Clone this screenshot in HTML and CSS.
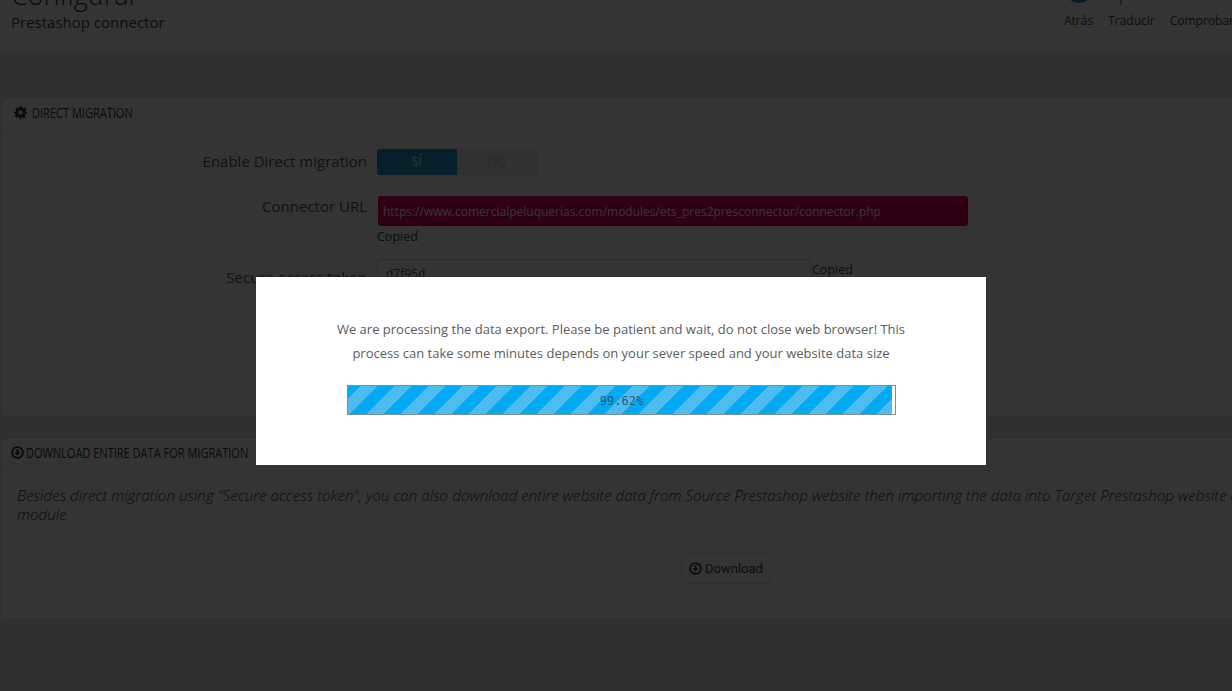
FILE: index.html
```html
<!DOCTYPE html>
<html lang="es">
<head>
  <meta charset="UTF-8" />
  <title>Configurar - Prestashop connector</title>
  <link rel="stylesheet" href="styles.css">
</head>
<body>
  <div class="page">
    <div class="page-head">
      <div class="head-titles">
        <h1>Configurar</h1>
        <h2>Prestashop connector</h2>
      </div>
      <div class="toolbar">
        <div class="tool">
          <svg class="tool-icon" width="24" height="28" viewBox="0 0 24 28"><circle cx="12" cy="9" r="15" fill="#1f8fb5"/></svg>
          <span>Atrás</span>
        </div>
        <div class="tool">
          <svg class="tool-icon" width="24" height="28" viewBox="0 0 24 28"><path d="M2 18V26" stroke="#3aa08f" stroke-width="1.500" fill="none"/></svg>
          <span>Traducir</span>
        </div>
        <div class="tool">
          <span class="tool-icon"></span>
          <span>Comprobar</span>
        </div>
      </div>
    </div>

    <div class="content">
      <div class="panel panel-direct">
        <div class="panel-head">
          <svg width="13" height="13" viewBox="0 0 24 24"><path fill="currentColor" fill-rule="evenodd" d="M10 0h4l.7 3.300 2.200.9L19.800 2.400l2.800 2.800-1.800 2.900.9 2.200L24 11v3l-3.300.7-.9 2.200 1.800 2.900-2.800 2.800-2.900-1.800-2.200.9L13 24h-3l-.7-3.300-2.200-.9-2.900 1.800-2.800-2.800 1.800-2.900-.9-2.200L0 14v-3l3.300-.7.9-2.200-1.800-2.900L5.200 2.400l2.900 1.800 2.200-.9zM12 8a4 4 0 1 0 0 8 4 4 0 0 0 0-8z"/></svg>
          <span class="head-text">DIRECT MIGRATION</span>
        </div>
        <div class="form-row row-enable">
          <label>Enable Direct migration</label>
          <div class="switch">
            <span class="switch-on">SÍ</span>
            <span class="switch-off">NO</span>
          </div>
        </div>
        <div class="form-row row-url">
          <label>Connector URL</label>
          <div>
            <div class="url-box">https://www.comercialpeluquerias.com/modules/ets_pres2presconnector/connector.php</div>
            <div class="copied">Copied</div>
          </div>
        </div>
        <div class="form-row row-token">
          <label>Secure access token</label>
          <div class="token-box">d7f95d</div>
          <div class="copied">Copied</div>
        </div>
      </div>

      <div class="panel panel-download">
        <div class="panel-head">
          <svg width="13" height="13" viewBox="0 0 24 24"><circle cx="12" cy="12" r="10" fill="none" stroke="currentColor" stroke-width="3.500"/><path fill="currentColor" d="M10 6h4v6h3.500L12 18l-5.500-6H10z"/></svg>
          <span class="head-text">DOWNLOAD ENTIRE DATA FOR MIGRATION</span>
        </div>
        <p class="panel-text">Besides direct migration using "Secure access token", you can also download entire website data from Source Prestashop website then importing the data into Target Prestashop website and this module</p>
        <div class="download-row">
          <button class="download-btn">
            <svg width="13" height="13" viewBox="0 0 24 24"><circle cx="12" cy="12" r="10" fill="none" stroke="currentColor" stroke-width="3.500"/><path fill="currentColor" d="M10 6h4v6h3.500L12 18l-5.500-6H10z"/></svg>
            Download
          </button>
        </div>
      </div>
    </div>
  </div>

  <!-- popup while export runs -->
  <div class="overlay">
    <div class="modal">
      <p>We are processing the data export. Please be patient and wait, do not close web browser! This process can take some minutes depends on your sever speed and your website data size</p>
      <div class="progress">
        <div class="progress-bar" style="width: 99.4%"></div>
        <span class="progress-label">99.62%</span>
      </div>
    </div>
  </div>
</body>
</html>
```

FILE: styles.css
```css
* {
    margin: 0;
    padding: 0;
    box-sizing: border-box;
}

html, body {
    height: 100%;
    overflow: hidden;
}

body {
    background-color: #eaeaea;
    color: #555;
    font-family: 'Open Sans', sans-serif;
    font-size: 13px;
}

.page {
    width: 1560px;
    margin-top: -22px;
}

.page-head {
    height: 75px;
    background-color: #fff;
    border-bottom: 1px solid #dfe3e5;
    padding-left: 11px;
    display: flex;
    justify-content: space-between;
    width: 1232px;
    overflow: hidden;
}

.page-head h1 {
    font-size: 27px;
    font-weight: 300;
    line-height: 30px;
    margin-top: 2px;
    color: #333;
}

.page-head h2 {
    font-size: 15px;
    font-weight: 400;
    line-height: 20px;
    margin-top: 2px;
    color: #444;
}

.toolbar {
    display: flex;
    gap: 15px;
    flex-shrink: 0;
    margin-right: -2px;
    padding-top: 1px;
}

.tool {
    display: flex;
    flex-direction: column;
    align-items: center;
    font-size: 12px;
    line-height: 16px;
    color: #444;
}

.tool-icon {
    display: block;
    height: 28px;
    margin-bottom: 6px;
}

.content {
    padding: 44px 0 0 1px;
}

.panel {
    background-color: #fff;
    border: 1px solid #d3d8db;
    border-radius: 5px;
}

.panel-direct {
    height: 321px;
    margin-bottom: 19px;
}

.panel-download {
    height: 183px;
}

.panel-head {
    height: 33px;
    display: flex;
    align-items: center;
    gap: 5px;
    padding-left: 12px;
    padding-bottom: 4px;
    border-bottom: 1px solid #eef0f1;
    color: #333;
}

/* no condensed font here, so squeeze the heading */
.head-text {
    font-size: 15px;
    transform: scaleX(0.735);
    transform-origin: left center;
}

.panel-download .panel-head {
    padding-left: 9px;
    gap: 2px;
}

.form-row {
    display: flex;
    align-items: flex-start;
}

.form-row label {
    width: 365px;
    flex-shrink: 0;
    text-align: right;
    font-size: 15px;
    color: #555;
    margin-right: 10px;
}

.row-enable {
    margin-top: 18px;
}

.row-enable label {
    line-height: 25px;
}

.switch {
    display: flex;
    height: 26px;
    width: 160px;
    font-size: 12px;
    line-height: 26px;
    text-align: center;
}

.switch-on {
    width: 80px;
    background-color: #1a9fc9;
    color: #fff;
    border-radius: 3px 0 0 3px;
}

.switch-off {
    width: 80px;
    background-color: #eef0f1;
    color: #ccc;
    border: 1px solid #dfe3e5;
    border-radius: 0 3px 3px 0;
}

.row-url {
    margin-top: 21px;
}

.row-url label {
    line-height: 20px;
}

.url-box {
    width: 590px;
    height: 30px;
    margin-left: 1px;
    padding-left: 5px;
    line-height: 31px;
    font-size: 12px;
    background-color: #e6005c;
    color: #fff;
    border-radius: 3px;
}

.copied {
    font-size: 12.500px;
    line-height: 22px;
    color: #444;
}

.row-token {
    margin-top: 11px;
}

.row-token label {
    line-height: 36px;
}

.token-box {
    width: 435px;
    height: 32px;
    padding-left: 8px;
    line-height: 28px;
    font-size: 12px;
    border: 1px solid #c7cdd0;
    border-radius: 3px;
}

.panel-text {
    width: 1300px;
    font-size: 15.200px;
    font-style: italic;
    font-weight: 300;
    line-height: 19px;
    padding: 15px 0 0 15px;
    color: #333;
}

.download-row {
    padding: 29px 0 0 679px;
}

.download-btn {
    height: 31px;
    width: 90px;
    display: flex;
    align-items: center;
    justify-content: center;
    gap: 3px;
    background-color: #fff;
    border: 1px solid #dfe3e5;
    border-radius: 3px;
    color: #444;
    font-family: Roboto, sans-serif;
    font-size: 13px;
}

.overlay {
    position: fixed;
    inset: 0;
    background-color: rgba(0, 0, 0, 0.795);
    display: flex;
    justify-content: center;
    align-items: flex-start;
    padding-top: 277px;
    padding-left: 10px;
}

.modal {
    width: 730px;
    height: 188px;
    background-color: #fff;
    padding: 40px 80px 0;
    text-align: center;
    font-size: 13px;
    line-height: 24px;
    color: #5c5c5c;
}

.progress {
    position: relative;
    height: 30px;
    width: 549px;
    margin: 20px 0 0 11px;
    border: 1px solid #7b8d99;
    background-color: #fff;
}

.progress-bar {
    height: 100%;
    background-color: #00aaf5;
    background-image: linear-gradient(135deg, transparent 19%, #4dbcf0 19%, #4dbcf0 43%, transparent 43%, transparent 69%, #4dbcf0 69%, #4dbcf0 93%, transparent 93%);
    background-size: 34px 34px;
}

.progress-label {
    position: absolute;
    inset: 0;
    text-align: center;
    font-family: 'DejaVu Sans Mono', monospace;
    font-size: 12px;
    line-height: 31px;
    color: #2c5a78;
}
```
